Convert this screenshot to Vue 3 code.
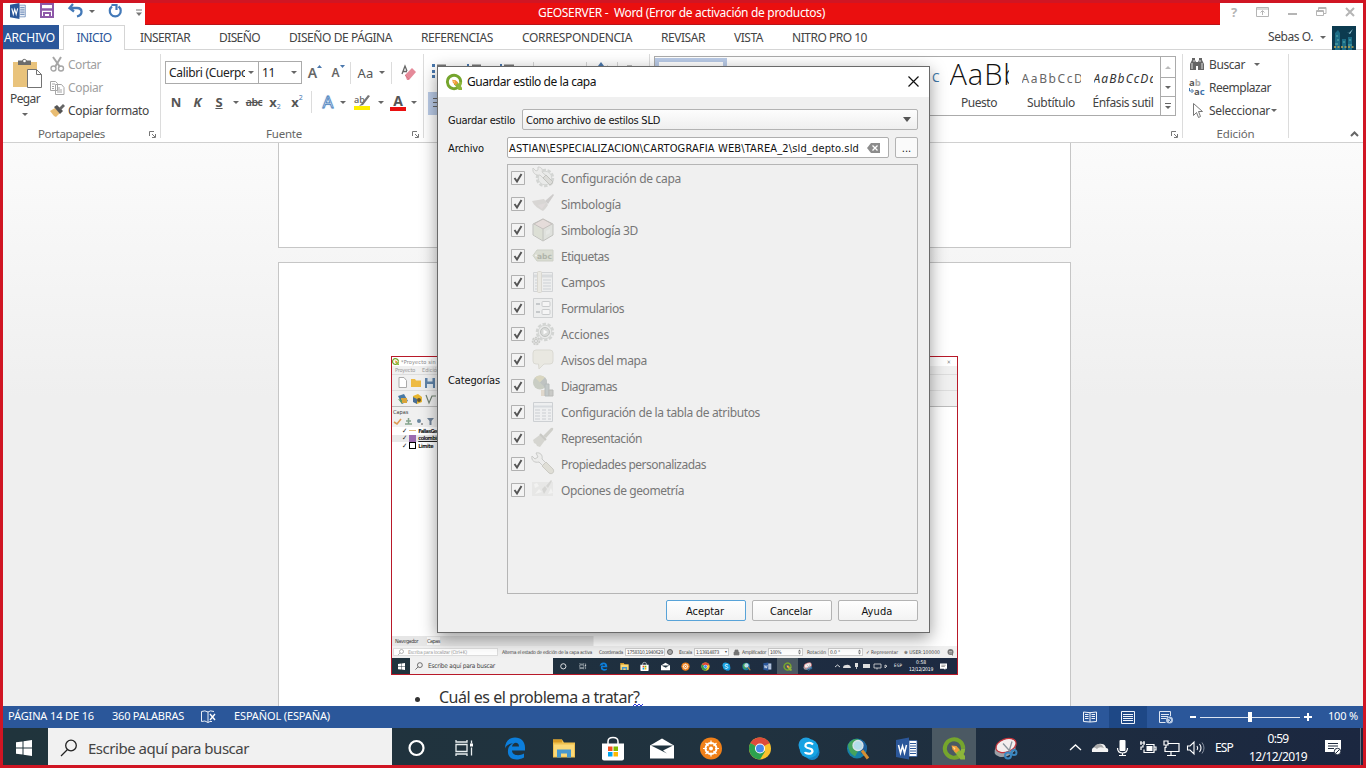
<script setup>
const fit = (el, { value }) => {
  if (!value) return
  const n = el.textContent.length
  const w = el.getBoundingClientRect().width
  el.style.letterSpacing = (value - w) / n + 'px'
}
const vFit = { mounted: fit }

const tabs = [
  ['INSERTAR', 50], ['DISEÑO', 41], ['DISEÑO DE PÁGINA', 103], ['REFERENCIAS', 72],
  ['CORRESPONDENCIA', 110], ['REVISAR', 44], ['VISTA', 29], ['NITRO PRO 10', 75]
]

const gear = '<circle cx="13" cy="11" r="8" fill="none" stroke="#d3d5d3" stroke-width="2.5" stroke-dasharray="3.4 1.6"/><circle cx="13" cy="11" r="6.8" fill="#e9eae9" stroke="#d3d5d3"/>'
const categories = [
  { t: 'Configuración de capa', w: 120, i: gear + '<path d="M1 1l3 3 2-1V0c4 0 5 3 4 5l10 9c2 3-1 5-3 3L8 8C4 9 0 6 1 1z" fill="#ebebea" stroke="#cfd0ce"/><path d="M11 11l7 7 3-3-7-7z" fill="#dcdcd9" stroke="#c2c3bf"/>' },
  { t: 'Simbología', w: 60, i: '<path d="M0 8l12-2 4 6c-2 3-3 4-5 6C7 16 2 13 0 8z" fill="#d8d6d4"/><path d="M13 8l8-7 1 1-6 9z" fill="#cecccb"/><path d="M6 12l8-2-4 6z" fill="#dfdada"/>' },
  { t: 'Simbología 3D', w: 77, i: '<path d="M11 0l10 5v11l-10 6-10-6V5z" fill="#dfe1dd" stroke="#c0c1bd"/><path d="M2 5l9-5 9 5-9 5z" fill="#e5dcda" stroke="#c4c0bd"/><path d="M2 6l9 5v10l-9-5z" fill="#dcdfd5"/><path d="M11 10v11" stroke="#c9cbc5" stroke-width="1.4"/><path d="M14 12l4-2v4l-4 2z" fill="#e5e7e4"/>' },
  { t: 'Etiquetas', w: 48, i: '<path d="M5 5h16v11H5l-4-5.500z" fill="#d9dcd2" stroke="#cdd0c7"/><circle cx="4" cy="10.500" r="1" fill="#f1f1ee"/><text x="5" y="13.500" font-family="DejaVu Sans" font-weight="bold" font-size="7.5" fill="#b0b4aa">abc</text>' },
  { t: 'Campos', w: 44, i: '<path d="M1.500 1.500h19v19h-19z" fill="#edeeee" stroke="#d2d4d6"/><path d="M2 5h18" stroke="#d8dbdd" stroke-width="3"/><path d="M3 9h3m5 0h8M3 12h3m5 0h8M3 15h3m5 0h8M3 18h3m5 0h8" stroke="#cdd1d5"/><rect x="5.500" y="0.500" width="4" height="21" rx="1" fill="#eae9e3" stroke="#dad8d1"/>' },
  { t: 'Formularios', w: 63, i: '<path d="M1.500 1.500h19v19h-19z" fill="#edeeee" stroke="#cfd1d2"/><path d="M4 7h4M4 15h4" stroke="#b9bdc0" stroke-width="1.600"/><rect x="10" y="4.500" width="8" height="5" rx="1" fill="#f5f5f5" stroke="#c9cbcc"/><rect x="10" y="12.500" width="8" height="5" rx="1" fill="#f5f5f5" stroke="#c9cbcc"/>' },
  { t: 'Acciones', w: 48, i: '<g transform="translate(0 -2)">' + gear + '<circle cx="13" cy="11" r="4.500" fill="#d8dad8" stroke="#c0c2c0"/><path d="M11.500 8.500l4 2.500-4 2.500z" fill="#fafafa"/></g><circle cx="4" cy="18" r="3.500" fill="#dedfdd" stroke="#cccdcb" stroke-width="1.600" stroke-dasharray="2 1"/><circle cx="4" cy="18" r="1.500" fill="#f0f0f0" stroke="#c7c8c6"/>' },
  { t: 'Avisos del mapa', w: 86, i: '<path d="M4 1h14q3 0 3 3v8q0 3-3 3h-6l-5 5-.5-5H4q-3 0-3-3V4q0-3 3-3z" fill="#e9e8e1" stroke="#dad9d2"/>' },
  { t: 'Diagramas', w: 56, i: '<circle cx="8" cy="7.500" r="7" fill="#c9cdc4"/><path d="M8 7.500L3 2.500a7 7 0 0 1 10 0z" fill="#d9d6c0"/><path d="M8 7.500l5-5a7 7 0 0 1 0 10z" fill="#bfc3c2"/><path d="M9 15h4v6H9z" fill="#e0d8cc"/><path d="M13 9h4v12h-4z" fill="#c3c9c9" stroke="#b6bbbb"/><path d="M17 15h4v6h-4z" fill="#c9cac7" stroke="#babbb8"/>' },
  { t: 'Configuración de la tabla de atributos', w: 199, i: '<path d="M1.500 1.500h19v19h-19z" fill="#eeeff0" stroke="#cdd0d3"/><path d="M2 5.500h18" stroke="#d7dade" stroke-width="2"/><path d="M3 9h5m2 0h4m2 0h3M3 12h5m2 0h4m2 0h3M3 15h5m2 0h4m2 0h3M3 18h5m2 0h4m2 0h3" stroke="#cacdd1"/>' },
  { t: 'Representación', w: 81, i: '<path d="M1 13l8-6 5 5-6 8-3-1-1-2-2-1z" fill="#d5d5d0"/><path d="M8 7l6 6" stroke="#c9c9c4" stroke-width="2"/><path d="M11 9l8-8q3-1 2 2l-7 8z" fill="#cfcfca"/>' },
  { t: 'Propiedades personalizadas', w: 145, i: '<path d="M4 0c4-1 7 2 6 6l4 4-3 3-4-4C3 10-1 8 0 3l3 3 3-2z" fill="#ececeb" stroke="#c9cac8"/><path d="M14 9l7 7c2 3-1 6-4 4l-7-7z" fill="#dfded6" stroke="#cbcac4"/>' },
  { t: 'Opciones de geometría', w: 123, i: '<path d="M0 3h21v14H0z" fill="#e7e7e6"/><path d="M2 5l3-1 2 3-4 2zM3 15l4-5 3 3zM16 15l3-6 2 5z" fill="#f2f2f1"/><path d="M10 10l3-3 2 3-3 5zM14 7l5-6 1 1-4 7z" fill="#d5d5d3"/>' }
]

const qgis = '<path d="M17.500 17.500A9.200 9.200 0 1 1 20.200 11" fill="none" stroke="#75a52d" stroke-width="4"/><path d="M20.200 11q0 3-1.500 5" fill="none" stroke="#8cb63a" stroke-width="4"/><path d="M11 10.500l4-.5 7 8.500V22h-4.500L11 14z" fill="#8db53a"/><path d="M8.500 8l5 .5 3 4-3.500 3-3.500-3.500z" fill="#f09a3a"/><path d="M9.500 9l3 1.500-1 2z" fill="#fae08f"/>'
const word = '<path d="M0 2.500L13 0v22L0 19.500z" fill="#2b579a"/><path d="M13 3h8v16h-8z" fill="#fff" stroke="#2b579a" stroke-width=".8"/><path d="M14 6h6M14 8.500h6M14 11h6M14 13.500h6M14 16h6" stroke="#2b579a"/><path d="M2.500 7.500l2 8 2-7 2 7 2-8" fill="none" stroke="#fff" stroke-width="1.500"/>'
const apps = [
  { i: '<circle cx="10.500" cy="10.500" r="7" fill="none" stroke="#fff" stroke-width="2.200"/>' },
  { i: '<path d="M1 2.500v2h11v-2M1 18.500v-2h11v2M1 7h11v7H1zM16.500 3v3M16.500 10v8" fill="none" stroke="#e8eef0" stroke-width="1.300"/><path d="M15 6h3v3h-3z" fill="#fff"/>' },
  { i: '<path d="M1 11C1 4 5 0 11 0c6 0 10 4 10 10v3H8c0 5 7 6 12 3v4C10 25 3 20 4 13c0-3 2-6 5-7-4 0-7 2-8 5zM8 9h7c0-5-6-5-7 0z" fill="#0c7edb"/>' },
  { i: '<path d="M0 2h9l2 3h11v15H0z" fill="#f0c14f"/><path d="M0 2h9v3H0z" fill="#d79a25"/><path d="M1 7h20v12H1z" fill="#fbd978"/><path d="M4 20v-8h14v8h-4v-4H8v4z" fill="#4698cf"/>' },
  { i: '<path d="M6 7V4q0-4 5-4t5 4v3" fill="none" stroke="#fff" stroke-width="1.500"/><path d="M0 6h22v15q0 2-2 2H2q-2 0-2-2z" fill="#fff"/><path d="M6 9h4.500v4.500H6z" fill="#f25022"/><path d="M11.500 9H16v4.500h-4.500z" fill="#7fba00"/><path d="M6 14.500h4.500V19H6z" fill="#00a4ef"/><path d="M11.500 14.500H16V19h-4.500z" fill="#ffb900"/>' },
  { i: '<path d="M-1 8L11 1l12 7v13H-1z" fill="#fff"/><path d="M0 8h22l-10 5 4 3L0 8z" fill="#203440"/>' },
  { i: '<circle cx="11" cy="11" r="11" fill="#f08019"/><circle cx="11" cy="11" r="5.500" fill="none" stroke="#fff" stroke-width="2"/><circle cx="11" cy="11" r="2" fill="#fff"/><path d="M11 3v4M11 15v4M3 11h4M15 11h4M5.500 5.500l3 3M13.500 13.500l3 3M16.500 5.500l-3 3M8.500 13.500l-3 3" stroke="#fff" stroke-width="1.200"/>' },
  { i: '<circle cx="11" cy="11" r="11" fill="#fbc22c"/><path d="M11 11L1.500 5.500A11 11 0 0 1 20.500 5.500z" fill="#de4b3c"/><path d="M11 11L1.500 5.500A11 11 0 0 0 11 22l5-8z" fill="#2da14e"/><path d="M2 6A11 11 0 0 1 20.500 6H11z" fill="#de4b3c"/><circle cx="11" cy="11" r="5" fill="#fff"/><circle cx="11" cy="11" r="4" fill="#4688ec"/>' },
  { i: '<circle cx="8" cy="7.500" r="7.500" fill="#1f9fe0"/><circle cx="14" cy="15" r="7.500" fill="#1585c8"/><circle cx="11" cy="11" r="9.500" fill="#16a3e3"/><path d="M15 7q-2-2-5-1.500T7.500 9q1 1.500 4 2t3 3q-1 2.500-4 2.200T7 14.500" fill="none" stroke="#fff" stroke-width="2.200"/>' },
  { i: '<circle cx="10" cy="11" r="10" fill="#1680a8"/><path d="M1 7q5-7 11-5l-3 4 4 4-5 9q-7-4-7-12z" fill="#45a35c"/><path d="M13 2q7 3 7 10l-6 5z" fill="#1e5e9c"/><circle cx="11" cy="8" r="5" fill="#b4dcea" stroke="#dce3e8" stroke-width="1.300"/><path d="M15 13l6 8" stroke="#d68e32" stroke-width="3"/>' },
  { i: word },
  { i: qgis, active: true },
  { i: '<ellipse cx="11" cy="12" rx="11" ry="7" fill="#9b9fa6" transform="rotate(-20 11 12)"/><ellipse cx="12" cy="8" rx="10.500" ry="6.500" fill="#f3eeee" stroke="#c4343c" stroke-width="1.200" transform="rotate(-20 12 8)"/><path d="M9 6l9 10M18 4l-3 10" stroke="#8a949c" stroke-width="1.300"/><circle cx="14" cy="18" r="3" fill="none" stroke="#3b86c0" stroke-width="2"/><circle cx="20" cy="15" r="2.500" fill="none" stroke="#3b86c0" stroke-width="2"/>' }
]
</script>

<template>
  <div class="screen">
    <header class="title">
      <div class="quick">
        <svg class="q1" width="16" height="16" viewBox="0 0 22 22" v-html="word" />
        <svg class="q2" width="14" height="14" viewBox="0 0 14 14"><path d="M1 0v13h12V0zM4 13V9h6v4" fill="none" stroke="#8d58a8" stroke-width="2" /><path d="M1 5.500h12" stroke="#8d58a8" stroke-width="2.500" /></svg>
        <svg class="q3" width="16" height="14" viewBox="0 0 16 14"><path d="M5 0L1.500 4 6 7.500M2 4h7c6 0 6 7 0 8.500" fill="none" stroke="#4379b8" stroke-width="2.300" /></svg>
        <i class="arr q4" />
        <svg class="q5" width="14" height="14" viewBox="0 0 14 14"><path d="M10.500 2.500A5.500 5.500 0 1 1 4 2.500M3.500 1h5v5" fill="none" stroke="#4379b8" stroke-width="2.200" /></svg>
        <svg class="q6" width="6" height="8" viewBox="0 0 6 8"><path d="M0 1h6" stroke="#777" /><path d="M0 3.500h6L3 7z" fill="#777" /></svg>
      </div>
      <div class="caption"><span v-fit="287">GEOSERVER -&nbsp; Word (Error de activación de productos)</span></div>
      <div class="winbtns">
        <b>?</b>
        <svg width="14" height="12" viewBox="0 0 14 12"><path d="M.5 1.500h12v9H.5zM.5 3h12M6.500 9V5M4.500 6.500l2-2 2 2" fill="none" stroke="#b5b5b5" /></svg>
        <svg width="10" height="12" viewBox="0 0 10 12"><path d="M0 8h9" stroke="#b5b5b5" stroke-width="2" /></svg>
        <svg width="11" height="12" viewBox="0 0 11 12"><path d="M.5 4.500h7v5h-7zM2.500 4V1.500h7.500v6H8M.5 5.500h7M2.500 2.500H10" fill="none" stroke="#b5b5b5" /></svg>
        <svg width="10" height="12" viewBox="0 0 10 12"><path d="M1 2l8 8M9 2l-8 8" stroke="#b5b5b5" stroke-width="2" /></svg>
      </div>
    </header>

    <nav class="tabs">
      <div class="file"><span v-fit="51">ARCHIVO</span></div>
      <div class="home"><span v-fit="35">INICIO</span></div>
      <div class="others"><span v-for="t in tabs" :key="t[0]" v-fit="t[1]">{{ t[0] }}</span></div>
      <div class="user">
        <span v-fit="45">Sebas O.</span><i class="arr" />
        <svg width="24" height="24" viewBox="0 0 24 24"><path d="M0 0h24v24H0z" fill="#0c3b50" /><path d="M3 24V7l3-3 2 3v17zM10 24V13h4v11zM16 24V11h4v13z" fill="#1c6c86" /><path d="M4 10h2M5 14h2M11 16h2M17 14h2M3 18h3M16 19h4" stroke="#5db0ad" /><path d="M2 21h20" stroke="#c3a650" stroke-width="1.500" stroke-dasharray="2 1.500" /><path d="M15 6l2 1 4-4-3 5z" fill="#9fd0de" /></svg>
      </div>
    </nav>

    <section class="ribbon">
      <div class="group g1">
        <div class="clip">
          <div class="paste">
            <svg width="29" height="31" viewBox="0 0 29 31"><path d="M0 4h24v25H0z" fill="#e9c37c" /><path d="M5 7V2.500h4Q11-1 14 2.500h4V7z" fill="#6c6c6c" /><circle cx="11.500" cy="3" r="1.300" fill="#fff" /><path d="M14.500 11.500h9l5 5v13h-14z" fill="#fff" stroke="#737373" /><path d="M23.500 11.500v5h5" fill="none" stroke="#737373" /></svg>
            <span v-fit="30">Pegar</span><i class="arr" />
          </div>
          <div class="cuts">
            <div class="dim"><svg width="15" height="15" viewBox="0 0 15 15"><path d="M3 0l7 10M11 0L5 10" stroke="#a6a6a6" stroke-width="2" /><circle cx="3.500" cy="11.500" r="2.500" fill="none" stroke="#a6a6a6" stroke-width="1.400" /><circle cx="11" cy="11.500" r="2.500" fill="none" stroke="#a6a6a6" stroke-width="1.400" /></svg><span v-fit="33">Cortar</span></div>
            <div class="dim"><svg width="15" height="15" viewBox="0 0 15 15"><path d="M.5 1.500h5l2 2v7h-7zM5.500 4.500h6l2.500 3v7H5.500z" fill="#fff" stroke="#a6a6a6" /><path d="M2 4h3M2 6.500h2M2 8.500h2M7 8h3M7 10h5M7 12h5" stroke="#a6a6a6" /></svg><span v-fit="35">Copiar</span></div>
            <div><svg width="15" height="15" viewBox="0 0 15 15"><path d="M0 8l5-3 5 5-4 4-2-1z" fill="#e9bd73" /><path d="M4 4l3-2 6 6-3 3z" fill="#555" /><path d="M9 5l4-4 2 2-4 4z" fill="#666" /></svg><span v-fit="81">Copiar formato</span></div>
          </div>
        </div>
        <div class="foot"><span v-fit="67">Portapapeles</span><svg class="launch" width="7" height="7" viewBox="0 0 7 7"><path d="M.5 5V.5H5M3 3l3 3M6.500 3v3.500H3" fill="none" stroke="#777" /></svg></div>
      </div>

      <div class="group g2">
        <div class="frow1">
          <div class="cb c1"><div class="crop"><span v-fit="79">Calibri (Cuerpo</span></div><i class="arr" /></div>
          <div class="cb c2"><span v-fit="13">11</span><i class="arr" /></div>
          <div class="cell w24 grow"><b class="ga">A</b><svg width="5" height="3" viewBox="0 0 5 3"><path d="M0 3l2.500-3L5 3z" fill="#4a78ad" /></svg></div>
          <div class="cell w22 grow"><b class="gb">A</b><svg width="5" height="3" viewBox="0 0 5 3"><path d="M0 0l2.500 3L5 0z" fill="#4a78ad" /></svg></div>
          <i class="vs" />
          <div class="cell aa"><span v-fit="16">Aa</span><i class="arr" /></div>
          <i class="vs" />
          <svg class="eraser" width="17" height="16" viewBox="0 0 17 16"><path d="M1 9L4 1l2 5M2 6.500h4" fill="none" stroke="#666" stroke-width="1.300" /><path d="M4 10l7-7 4 4-7 8H6z" fill="#e58a99" /><path d="M4 10l4 4" stroke="#d87888" /></svg>
        </div>
        <div class="frow2">
          <b class="cell w22">N</b><b class="cell w21 it">K</b><b class="cell w22 un">S</b><i class="arr" />
          <span class="cell abc">abc</span>
          <span class="cell w22"><b>x</b><sub>2</sub></span><span class="cell w22"><b>x</b><sup>2</sup></span><i class="vs" />
          <span class="cell w24 glow">A</span><i class="arr" />
          <svg class="hl" width="17" height="17" viewBox="0 0 17 17"><text x="0" y="9" font-family="Open Sans" font-weight="600" font-size="9" fill="#666">ab</text><path d="M7 10l7-9 2 1-7 9-4 1z" fill="#767676" /><path d="M0 12h16v4H0z" fill="#ffef00" /></svg><i class="arr" />
          <b class="cell fc">A</b><i class="arr" />
        </div>
        <div class="foot"><span v-fit="36">Fuente</span><svg class="launch" width="7" height="7" viewBox="0 0 7 7"><path d="M.5 5V.5H5M3 3l3 3M6.500 3v3.500H3" fill="none" stroke="#777" /></svg></div>
      </div>

      <div class="group g3">
        <svg width="200" height="18" viewBox="0 0 200 18"><g fill="#4a78ad"><path d="M0 2h3v3H0zM0 8h3v3H0zM0 13h3v3H0zM35 2h2v3h-2zM68 2h2v3h-2zM166 4l3-4 3 4z" /></g><path d="M5 3.500h9M40 3.500h9M72 3.500h10M195 4.500h5" stroke="#777" stroke-width="2" /><path d="M101.500 0v16M154.500 0v16M185.500 0v16M175.500 3v14" stroke="#d6d6d6" /></svg>
        <div class="just"><svg width="10" height="14" viewBox="0 0 10 14"><path d="M0 1.500h10M0 5.500h10M0 9.500h10" stroke="#666" /></svg></div>
      </div>

      <div class="group g4">
        <div class="gallery">
          <div class="sel" />
          <div class="prev"><span>C</span></div>
          <div class="style"><div class="big"><span v-fit="72">AaBb</span></div><small v-fit="36">Puesto</small></div>
          <div class="style"><div class="sub"><span v-fit="63">AaBbCcD</span></div><small v-fit="48">Subtítulo</small></div>
          <div class="style"><div class="emp"><span v-fit="64">AaBbCcDd</span></div><small v-fit="61">Énfasis sutil</small></div>
          <div class="scr"><div><i class="up" /></div><div><i class="arr" /></div><div><svg width="6" height="7" viewBox="0 0 6 7"><path d="M0 .5h6" stroke="#666" /><path d="M0 3h6L3 6z" fill="#666" /></svg></div></div>
        </div>
        <div class="foot"><svg class="launch" width="7" height="7" viewBox="0 0 7 7"><path d="M.5 5V.5H5M3 3l3 3M6.500 3v3.500H3" fill="none" stroke="#777" /></svg></div>
      </div>

      <div class="group g5">
        <div class="edits">
          <div><svg width="16" height="15" viewBox="0 0 16 15"><path d="M1 13V7l2-4V1h3v2l1 2h2l1-2V1h3v2l2 4v6h-6V9H7v4z" fill="#666" /><path d="M3 6v6M13 6v6M5 3v2M11 3v2" stroke="#ddd" /></svg><span v-fit="36">Buscar</span><i class="arr far" /></div>
          <div><svg width="16" height="18" viewBox="0 0 16 18"><text x="0" y="7" font-family="Open Sans" font-weight="bold" font-size="9.5" fill="#555">a<tspan fill="#aaa">b</tspan></text><text x="5" y="15.500" font-family="Open Sans" font-weight="bold" font-size="9.5" fill="#555">a<tspan fill="#3e74ad">c</tspan></text><path d="M.5 9v3h3M2.500 10l2 2-2 2" stroke="#3e74ad" fill="none" /></svg><span v-fit="62">Reemplazar</span></div>
          <div><svg width="16" height="15" viewBox="0 0 16 15"><path d="M4.500.5v12l3-3 2 5 2-1-2-5h4z" fill="#fff" stroke="#777" /></svg><span v-fit="61">Seleccionar</span><i class="arr near" /></div>
        </div>
        <div class="foot"><span v-fit="38">Edición</span></div>
      </div>
      <svg class="collapse" width="9" height="6" viewBox="0 0 9 6"><path d="M1 5l3.500-3.500L8 5" fill="none" stroke="#666" stroke-width="2" /></svg>
    </section>

    <main class="doc">
      <div class="page p1" />
      <div class="page p2">
        <div class="shot">
          <div class="s-title"><svg width="7" height="7" viewBox="0 0 22 22" v-html="qgis" /><span v-fit="72">*Proyecto sin título — QGIS</span><em>✕</em></div>
          <div class="s-menu"><span v-fit="20">Proyecto</span><span v-fit="18">Edición</span></div>
          <div class="s-bar">
            <svg width="9" height="11" viewBox="0 0 9 11"><path d="M1 .5h5l2.500 3v7H1z" fill="#fff" stroke="#aaa" /></svg>
            <svg width="10" height="9" viewBox="0 0 10 9"><path d="M0 1h4l1 1.500h5V9H0z" fill="#eebb43" /></svg>
            <svg width="10" height="10" viewBox="0 0 10 10"><path d="M0 0h10v10H0z" fill="#5f83a9" /><path d="M2.500 0h5v3.500h-5zM2 6h6v4H2z" fill="#e4ebf1" /></svg>
          </div>
          <div class="s-bar">
            <svg width="10" height="10" viewBox="0 0 10 10"><path d="M0 2l6-2 4 7-6 3z" fill="#4979a4" /><path d="M3 4h6v5H3z" fill="#d9a53c" /><path d="M0 5l4 1v4z" fill="#609b63" /></svg>
            <svg width="10" height="10" viewBox="0 0 10 10"><path d="M1 2l5-2 4 3v5l-5 2-4-3z" fill="#e8b62f" /><path d="M1 3l4 2v5L1 8z" fill="#486e96" /><circle cx="7" cy="6" r="2" fill="#665831" /></svg>
            <svg width="10" height="10" viewBox="0 0 10 10"><path d="M0 1l3 8 3-7h4" fill="none" stroke="#718171" stroke-width="1.200" /></svg>
          </div>
          <div class="s-lab">Capas</div>
          <div class="s-bar s-tools">
            <svg width="7" height="7" viewBox="0 0 7 7"><path d="M0 4l3 2 4-5" stroke="#dd9a55" stroke-width="1.600" fill="none" /></svg>
            <svg width="7" height="7" viewBox="0 0 7 7"><path d="M0 6h7M1 3h5M3.500 0v6" stroke="#84a28c" stroke-width="1.500" /></svg>
            <svg width="7" height="7" viewBox="0 0 7 7"><circle cx="3" cy="3" r="2" fill="#6a87a0" /><path d="M5 6h2" stroke="#555" /></svg>
            <svg width="7" height="7" viewBox="0 0 7 7"><path d="M0 0h7L4.500 3v4h-2V3z" fill="#71849a" /></svg>
          </div>
          <div class="s-layers">
            <div><i>✓</i><u class="l1" /><span v-fit="36">FallasGeologicas</span></div>
            <div class="on"><i>✓</i><u class="l2" /><span class="ul" v-fit="21">colombia</span></div>
            <div><i>✓</i><u class="l3" /><span v-fit="15">Limite</span></div>
          </div>
          <div class="s-fill" />
          <div class="s-dock"><span v-fit="23">Navegador</span><span class="cur" v-fit="13">Capas</span></div>
          <div class="s-status">
            <div class="loc"><svg width="6" height="6" viewBox="0 0 6 6"><circle cx="3.500" cy="2.500" r="2" fill="none" stroke="#999" stroke-width=".7" /><path d="M2 4L0 6" stroke="#999" stroke-width=".7" /></svg><span v-fit="59">Escriba para localizar (Ctrl+K)</span></div>
            <span class="m1" v-fit="90">Alterna el estado de edición de la capa activa</span>
            <span class="m2" v-fit="24">Coordenada</span><div class="bx b1"><span v-fit="36">1758310,1940629</span></div>
            <svg class="m3" width="6" height="6" viewBox="0 0 6 6"><circle cx="3" cy="3" r="2.500" fill="#aaa" stroke="#666" /></svg>
            <span class="m4" v-fit="13">Escala</span><div class="bx b2"><span v-fit="23">1:13914873</span><small>▾</small></div>
            <svg class="m5" width="5" height="6" viewBox="0 0 5 6"><path d="M0 3h5v3H0zM1 3V1h3v2" fill="#777" stroke="#777" stroke-width=".7" /></svg>
            <span class="m6" v-fit="24">Amplificador</span><div class="bx b3"><span v-fit="11">100%</span><svg width="3" height="6" viewBox="0 0 3 6"><path d="M0 2.500L1.500.500 3 2.500zM0 3.500h3l-1.500 2z" fill="#777" /></svg></div>
            <span class="m7" v-fit="19">Rotación</span><div class="bx b4"><span v-fit="10">0.0 °</span><svg width="3" height="6" viewBox="0 0 3 6"><path d="M0 2.500L1.500.500 3 2.500zM0 3.500h3l-1.500 2z" fill="#777" /></svg></div>
            <span class="m8" v-fit="32">✓ Representar</span><span class="m9" v-fit="36">⊕ USER:100000</span>
            <svg class="m10" width="7" height="7" viewBox="0 0 7 7"><circle cx="3.500" cy="3" r="3" fill="#777" /><path d="M4 5l2 2V4z" fill="#777" /><path d="M2 2.500h3M2 4h3" stroke="#ddd" stroke-width=".6" /></svg>
          </div>
          <div class="s-task">
            <div class="s-start"><svg width="7" height="7" viewBox="0 0 16 16"><path d="M0 2l7-1v7H0zM8 1l8-1v8H8zM0 9h7v6l-7-1zM8 9h8v7l-8-1z" fill="#fff" /></svg></div>
            <div class="s-search"><svg width="8" height="8" viewBox="0 0 18 18"><circle cx="11" cy="7" r="5.500" fill="none" stroke="#333" stroke-width="1.500" /><path d="M7 11l-6 6" stroke="#333" stroke-width="1.500" /></svg><span v-fit="67">Escribe aquí para buscar</span></div>
            <div v-for="(a, k) in apps" :key="k" class="s-app" :class="{ act: a.active }"><svg width="9" height="9" viewBox="-1 -1 24 24" v-html="a.i" /></div>
            <svg class="s-tray" width="52" height="8" viewBox="0 0 52 8"><path d="M0 5l2.500-2L5 5" fill="none" stroke="#fff" stroke-width=".8" /><path d="M8 6q0-3 3-3 4-1 5 3zM20 1h3v4h-3zM28 2h7v4h-7z" fill="#ddd" /><path d="M21.500 5v2M39 2h7v4h-7zM42 6v1.500M50 3v3l2-2z" stroke="#ddd" fill="none" stroke-width=".8" /></svg>
            <span class="s-esp" v-fit="8">ESP</span><div class="s-clock"><span>0:58</span><span v-fit="24">12/12/2019</span></div>
            <svg class="s-note" width="7" height="7" viewBox="0 0 16 16"><path d="M0 1h16v12h-4v3l-3-3H0z" fill="#fff" /><path d="M3 5h10M3 8h8" stroke="#222" /></svg>
          </div>
        </div>
        <div class="bullet"><i /><span v-fit="194">Cuál es el problema a tratar</span><span class="sq">?<svg width="10" height="4" viewBox="0 0 10 4"><path d="M0 3l2-2 2 2 2-2 2 2 2-2" fill="none" stroke="#2a36d8" /></svg></span></div>
      </div>
    </main>

    <footer class="status">
      <span v-fit="86">PÁGINA 14 DE 16</span><span class="st2" v-fit="72">360 PALABRAS</span>
      <svg class="st3" width="16" height="14" viewBox="0 0 16 14"><path d="M7 2Q4 0 .5 1.500v10Q4 10 7 12.500V2q2-2 6-.5M7 12.500q2-1.500 4-1" fill="none" stroke="#e8eef7" /><path d="M9 4l5 6M14 4L9 10" stroke="#fff" stroke-width="1.400" /></svg>
      <span class="st4" v-fit="96">ESPAÑOL (ESPAÑA)</span>
      <div class="right">
        <svg width="14" height="12" viewBox="0 0 14 12"><path d="M7 1.500v9.500M.5 1l6.500.7L13.500 1v9.500L7 11l-6.500-.5zM2 3.500h3.500M2 5.500h3.500M2 7.500h3.500M8.500 3.500H12M8.500 5.500H12M8.500 7.500H12" fill="none" stroke="#eef3fa" /></svg>
        <div class="view"><svg width="14" height="13" viewBox="0 0 14 13"><path d="M.5.500h13v12H.5zM2 3.500h10M2 5.500h10M2 7.500h10M2 9.500h10" fill="none" stroke="#eef3fa" /></svg></div>
        <svg class="web" width="15" height="13" viewBox="0 0 15 13"><path d="M11.500 5V.5H.5v11h6M2 3.500h8M2 5.500h7M2 7.500h5" fill="none" stroke="#dfe7f3" /><circle cx="10.500" cy="9" r="3.500" fill="#b9cbe4" /><path d="M9 7l3 2-2 2" stroke="#2b579a" fill="none" /></svg>
        <svg class="zoom" width="124" height="12" viewBox="0 0 124 12"><path d="M1 6h6M115 6h8M119 2v8" stroke="#fff" stroke-width="2" /><path d="M11 6.500h100" stroke="#dbe4f1" /><path d="M59 1h4v10h-4z" fill="#fff" /></svg>
        <span v-fit="30">100 %</span>
      </div>
    </footer>

    <footer class="taskbar">
      <div class="start"><svg width="16" height="16" viewBox="0 0 16 16"><path d="M0 2.300l6.500-.9v6.100H0zM7.500 1.200L16 0v7.500H7.500zM0 8.500h6.500v6.100L0 13.700zM7.500 8.500H16V16l-8.500-1.200z" fill="#fff" /></svg></div>
      <div class="search"><svg width="18" height="18" viewBox="0 0 18 18"><circle cx="11" cy="6.500" r="5.300" fill="none" stroke="#222" stroke-width="1.300" /><path d="M7.500 10.500L1 17" stroke="#222" stroke-width="1.300" /></svg><span v-fit="161">Escribe aquí para buscar</span></div>
      <div v-for="(a, k) in apps" :key="k" class="app" :class="{ act: a.active }"><svg width="22" height="23" viewBox="0 -0.500 22 23" v-html="a.i" /></div>
      <div class="tray">
        <svg width="142" height="18" viewBox="0 0 142 18"><path d="M1 11l5.500-5L12 11" fill="none" stroke="#fff" stroke-width="1.300" /><path d="M23 13q-1-5 4-5 1-4 6-3 3 0 4 4 3 0 2 4z" fill="#f3f3f3" /><path d="M25 8q3-5 8-2l2 3q-5-2-7 1z" fill="#aaa" /><rect x="50.500" y="1" width="6" height="11" rx="1" fill="#fff" /><path d="M48.500 9q0 5 5 5t5-5M53.500 14v3M50 16.500h7" stroke="#fff" fill="none" stroke-width="1.200" /><path d="M71 4h5M72 2v4M75 2v4M74 6v2h-2v3M77 5.500h8v8h-10v-3M85.500 8h1.500v3h-1.500" fill="none" stroke="#fff" stroke-width="1.200" /><path d="M77.500 7h6v5h-6z" fill="#fff" /><path d="M99 4.500h11v8H96V8M102 13v3M98 16.500h9M95 2h4v4h-4zM97 6v3" fill="none" stroke="#fff" stroke-width="1.200" /><path d="M118.500 7h2.500l4-4v12l-4-4h-2.500zM128 7q1.500 2 0 4M130.500 5q3 4 0 8" fill="none" stroke="#fff" stroke-width="1.100" /><path d="M133 3.500q4 5.500 0 11" fill="none" stroke="#8891a0" /></svg>
        <span class="esp" v-fit="18">ESP</span>
        <div class="clock"><span v-fit="21">0:59</span><span v-fit="58">12/12/2019</span></div>
        <svg class="note" width="17" height="16" viewBox="0 0 17 16"><path d="M0 0h16v11l-4 4-3-3H0z" fill="#fff" /><path d="M3 3.500h10M3 6h10M3 8.500h6" stroke="#202c40" /><circle cx="12.500" cy="11.500" r="3.200" fill="#fff" stroke="#202c40" /><path d="M10.500 13.500l4-4" stroke="#202c40" /></svg>
        <i class="peek" />
      </div>
    </footer>

    <div class="dialog">
      <div class="d-title"><svg width="16" height="16" viewBox="0 0 22 22" v-html="qgis" /><span v-fit="129">Guardar estilo de la capa</span><svg class="x" width="11" height="11" viewBox="0 0 11 11"><path d="M.5.500l10 10M10.500.500l-10 10" stroke="#111" stroke-width="1.200" /></svg></div>
      <div class="d-body">
        <div class="row r1"><label v-fit="67">Guardar estilo</label><div class="select"><span v-fit="134">Como archivo de estilos SLD</span><svg width="8" height="5" viewBox="0 0 8 5"><path d="M0 0h8L4 5z" fill="#555" /></svg></div></div>
        <div class="row r2"><label v-fit="36">Archivo</label><div class="input"><span v-fit="350">ASTIAN\ESPECIALIZACION\CARTOGRAFIA WEB\TAREA_2\sld_depto.sld</span><svg width="13" height="10" viewBox="0 0 13 10"><path d="M0 5l4-5h9v10H4z" fill="#8c8c8c" /><path d="M5.500 2.500l5 5M10.500 2.500l-5 5" stroke="#fff" stroke-width="1.300" /></svg></div><div class="dots">...</div></div>
        <div class="row r3"><label v-fit="52">Categorías</label>
          <div class="list">
            <div v-for="c in categories" :key="c.t" class="item">
              <svg class="chk" width="14" height="14" viewBox="0 0 14 14"><path d="M.5.500h13v13H.5z" fill="#f3f3f3" stroke="#b1b1b1" /><path d="M3.500 7l2.500 3.500L10.500 3" fill="none" stroke="#555" stroke-width="1.900" /></svg>
              <svg class="ci" width="22" height="22" viewBox="0 0 22 22" v-html="c.i" />
              <span v-fit="c.w">{{ c.t }}</span>
            </div>
          </div>
        </div>
        <div class="btns"><div class="btn def"><span v-fit="38">Aceptar</span></div><div class="btn"><span v-fit="42">Cancelar</span></div><div class="btn"><span v-fit="31">Ayuda</span></div></div>
      </div>
    </div>
  </div>
</template>

<style>
html, body { margin: 0; overflow: hidden; background: #cf1522; }
</style>

<style scoped>
* { box-sizing: border-box; }
.screen { position: relative; width: 1366px; height: 768px; border: 3px solid #d01523; display: flex; flex-direction: column; background: #fff; font: 12px/16px "Noto Sans", "Open Sans", sans-serif; color: #444; overflow: hidden; }
span, label, small { white-space: pre; display: inline-block; flex: none; }
svg { flex: none; display: block; overflow: visible; }
i.arr { flex: none; width: 0; height: 0; border: 3px solid transparent; border-top: 3px solid #666; border-bottom: 0; display: block; }
.title { height: 22px; flex: none; display: flex; }
.quick { width: 142px; display: flex; align-items: center; padding: 0 0 6px 7px; }
.q2 { margin-left: 14px; } .q3 { margin-left: 14px; } .q4 { margin-left: 5px; } .q5 { margin-left: 13px; } .q6 { margin: 3px 0 0 14px; }
.caption { width: 1075px; margin-top: -3px; padding-top: 5px; background: #ea0f0f; border-bottom: 1px solid #b91318; color: #fff; text-align: center; padding-right: 2px; }
.winbtns { flex: 1; display: flex; align-items: center; padding: 0 0 5px 11px; gap: 18px; color: #b5b5b5; }
.winbtns b { font-size: 13px; width: 7px; }
.tabs { height: 25px; flex: none; display: flex; border-bottom: 1px solid #d5d5d5; }
.file { width: 56px; background: #2b579a; color: #fff; padding: 5px 0 0 1px; height: 24px; }
.home { width: 62px; margin-left: 4px; border: 1px solid #d5d5d5; border-bottom: 0; background: #fff; height: 25px; text-align: center; color: #2b579a; padding: 4px 0 0; }
.others { display: flex; gap: 29px; padding: 5px 0 0 15px; }
.user { margin-left: auto; display: flex; align-items: center; padding-right: 7px; }
.user .arr { margin: 0 6px 0 7px; }
.user svg { margin-top: 1px; }
.ribbon { height: 93px; flex: none; display: flex; border-bottom: 1px solid #d0d0d0; position: relative; background: #fff; }
.group { position: relative; flex: none; height: 92px; display: flex; flex-direction: column; }
.group::after { content: ""; position: absolute; right: 0; top: 4px; height: 84px; width: 1px; background: #dcdcdc; }
.g1 { width: 158px; } .g2 { width: 263px; } .g3 { width: 226px; } .g4 { width: 533px; } .g5 { width: 106px; }
.foot { margin-top: auto; height: 16px; display: flex; justify-content: center; align-items: center; color: #666; position: relative; font-size: 11.5px; }
.g1 .foot { padding-right: 21px; } .g2 .foot { padding-right: 17px; }
.launch { position: absolute; right: 5px; top: 5px; }
.clip { display: flex; }
.paste { width: 44px; display: flex; flex-direction: column; align-items: center; padding-top: 8px; }
.paste svg { margin-left: 4px; } .paste span { margin-top: 2px; } .paste .arr { margin-top: 6px; }
.cuts { padding: 3px 0 0 3px; }
.cuts div { height: 23px; display: flex; align-items: center; gap: 3px; }
.dim { color: #a0a0a0; }
.frow1 { display: flex; height: 23px; margin: 11px 0 0 4px; align-items: center; }
.cb { height: 23px; border: 1px solid #ababab; display: flex; align-items: center; justify-content: space-between; padding: 0 4px 0 3px; color: #222; }
.c1 { width: 94px; } .crop { width: 76px; height: 16px; overflow: hidden; } .c2 { width: 44px; margin-left: -1px; }
.cell { display: flex; justify-content: center; align-items: center; color: #555; }
.w21 { width: 21px; } .w22 { width: 22px; } .w24 { width: 24px; }
.grow { align-items: flex-start; height: 22px; position: relative; top: -1px; left: 1px; }
.grow b { font-weight: 600; color: #666; margin-top: 4px; } .ga { font-size: 14px; } .gb { font-size: 12px; } .grow svg { margin-top: 4px; }
.vs { display: block; width: 1px; height: 22px; background: #dcdcdc; flex: none; }
.frow1 .vs:nth-of-type(1) { margin-left: 2px; }
.aa { width: 40px; gap: 5px; font-size: 13px; } .eraser { margin-left: 9px; }
.frow2 { display: flex; margin: 7px 0 0 4px; height: 22px; align-items: center; font-size: 13px; }
.it { font-style: italic; } .un { text-decoration: underline; }
.frow2 > .arr:nth-of-type(1) { margin: 0 5px 0 3px; }
.abc { width: 20px; font-size: 10.5px; font-weight: 600; text-decoration: line-through; letter-spacing: -.5px; }
sub, sup { font-size: 7px; color: #3f73ad; line-height: 8px; } sub { margin-top: 9px; } sup { margin-top: -9px; }
.frow2 .vs { margin: 0 4px 0 3px; }
.glow { font-size: 17px; color: #fff; -webkit-text-stroke: .8px #4a80bd; text-shadow: 0 0 2px #8cb7e5; }
.hl { margin: 0 7px 0 8px; }
.fc { width: 16px; height: 17px; margin: 0 5px 0 6px; font-size: 14px; border-bottom: 4px solid #ea1010; line-height: 13px; }
.g3 { padding: 12px 0 0 8px; }
.just { margin: 12px 0 0 -4px; width: 30px; height: 23px; background: #b9cae6; padding: 5px 0 0 5px; }
.gallery { margin: 6px 0 0 4px; width: 522px; height: 60px; border: 1px solid #ababab; display: flex; }
.sel { width: 72px; margin: 1px 0; border: 4px solid #b9cae6; }
.prev { width: 216px; padding: 13px 0 0 205px; color: #3f7aaa; }
.prev span { width: 8px; }
.style { width: 72px; display: flex; flex-direction: column; align-items: center; }
.style > div { width: 59px; height: 37px; overflow: hidden; display: flex; align-items: center; }
.big { font-size: 29px; color: #111; font-weight: 300; font-family: "Open Sans", sans-serif; } .big span { line-height: 34px; margin-top: -3px; }
.sub { color: #666; } .sub span, .emp span { margin-top: 7px; } .emp { font-style: italic; color: #333; }
.style small { font-size: 12px; margin-top: 1px; }
.scr { width: 15px; margin-left: auto; border-left: 1px solid #ababab; }
.scr div { height: 19px; display: flex; align-items: center; justify-content: center; border-bottom: 1px solid #ababab; } .scr div:first-child { height: 21px; } .scr div:last-child { border: 0; height: 18px; }
.up { border: 3px solid transparent; border-top: 0; border-bottom: 3px solid #bbb; }
.edits { padding: 3px 0 0 6px; } .edits > div { height: 23px; display: flex; align-items: center; } .edits span { margin-left: 4px; }
.far { margin-left: 9px !important; } .near { margin-left: 1px !important; }
.collapse { margin: 81px 0 0 61px; }
.g5 .foot { padding-right: 1px; }
.doc { height: 563px; flex: none; background: linear-gradient(#fbfbfb, #efefef 45%); overflow: hidden; }
.page { width: 793px; margin-left: 275px; background: #fff; border: 1px solid #c6c6c6; }
.p1 { height: 105px; border-top: 0; }
.p2 { margin-top: 14px; height: 500px; padding: 93px 0 0 112px; }
.shot { width: 567px; height: 319px; border: 1px solid #b81929; background: #f0f0f0; display: flex; flex-direction: column; font: 5.5px/8px "DejaVu Sans Condensed", "DejaVu Sans", sans-serif; color: #444; overflow: hidden; }
.s-title { height: 9px; background: #fff; display: flex; align-items: center; gap: 2px; flex: none; color: #888; } .s-title em { margin-left: auto; padding-right: 6px; font-style: normal; }
.s-menu { height: 8px; display: flex; gap: 7px; padding-left: 3px; color: #999; flex: none; }
.s-bar { height: 16px; display: flex; align-items: center; gap: 4px; padding-left: 6px; flex: none; border-top: 1px solid #ddd; }
.s-lab { height: 9px; padding: 1px 0 0 1px; flex: none; border-top: 1px solid #bbb; background: linear-gradient(90deg, #f0f0f0 200px, #fff 200px); }
.s-tools { height: 12px; padding-left: 2px; border: 0; flex: none; background: linear-gradient(90deg, #f0f0f0 200px, #fff 200px); }
.s-layers { flex: none; font-size: 5.5px; font-weight: bold; color: #222; background: #fff; } .s-layers div { width: 200px; height: 7.5px; display: flex; align-items: center; gap: 2px; padding-left: 10px; } .s-layers i { font-size: 7px; font-style: normal; }
.s-layers u { width: 7px; height: 7px; } .l1 { height: 1px !important; background: #e2bc7a; } .l2 { background: #9b6bb0; } .l3 { border: 1px solid #000; } .on { background: #e9e9e9; } .ul { text-decoration: underline; }
.s-fill { flex: 1; background: #fff; }
.s-dock { height: 10px; flex: none; display: flex; align-items: center; padding-left: 3px; background: linear-gradient(90deg, #e6e6e6 201px, #fff 202px); } .cur { background: #f8f8f8; margin-left: 9px; }
.s-status { height: 12px; flex: none; display: flex; align-items: center; font-size: 5px; background: #f0f0f0; } .loc { width: 105px; height: 8px; margin-left: 1px; border: 1px solid #ddd; background: #fff; display: flex; align-items: center; gap: 4px; padding-left: 4px; color: #999; }
.m1 { margin-left: 4px; } .m2 { margin-left: 7px; } .bx { height: 8px; border: 1px solid #ccc; background: #fff; display: flex; align-items: center; justify-content: space-between; padding: 0 1px; margin-left: 2px; } .b1 { width: 40px; } .b2 { width: 35px; } .b3 { width: 35px; } .b4 { width: 35px; }
.m3 { margin-left: 2px; } .m4 { margin-left: 6px; } .m5 { margin-left: 5px; } .m6 { margin-left: 3px; } .m7 { margin-left: 4px; } .m8 { margin-left: 3px; } .m9 { margin-left: 6px; } .m10 { margin-left: 7px; }
.s-task { height: 16px; flex: none; background: linear-gradient(90deg, #20333d, #1d2a42); display: flex; align-items: center; color: #fff; } .s-start { width: 18px; display: flex; justify-content: center; } .s-search { width: 143px; height: 16px; background: #f1f1f1; color: #444; display: flex; align-items: center; gap: 5px; padding-left: 5px; font-size: 6.5px; }
.s-app { width: 20.4px; height: 16px; display: flex; align-items: center; justify-content: center; } .act { background: #4b5963; }
.s-tray { margin-left: 17px; } .s-esp { margin-left: 7px; font-size: 4.5px; } .s-clock { width: 28px; display: flex; flex-direction: column; align-items: center; line-height: 7px; margin: 0 5px 0 5px; font-size: 5px; }
.bullet { display: flex; align-items: center; height: 22px; margin: 11px 0 0 24px; font-size: 16px; color: #333; } .bullet i { width: 5px; height: 5px; border-radius: 3px; background: #333; margin: 4px 19px 0 0; } .sq { position: relative; } .sq svg { position: absolute; left: 0; bottom: -2px; }
.status { height: 22px; flex: none; background: #2b579a; color: #fff; font-size: 11px; display: flex; align-items: center; padding: 0 5px; } .status > span, .right > span { position: relative; top: -1px; } .st2 { margin-left: 18px; } .st3 { margin-left: 17px; } .st4 { margin-left: 17px; }
.right { margin-left: auto; display: flex; align-items: center; } .view { width: 38px; height: 22px; margin-left: 12px; background: #1e4886; display: flex; align-items: center; justify-content: center; } .web { margin-left: 12px; } .zoom { margin: 0 15px 0 15px; }
.taskbar { height: 37px; flex: none; background: linear-gradient(90deg, #20343c, #20323f 55%, #1b2740); display: flex; color: #fff; } .start { width: 45px; display: flex; align-items: center; justify-content: center; padding: 3px 3px 0 0; } .search { width: 344px; background: #f1f1f1; color: #444; display: flex; align-items: center; font-size: 15px; padding: 3px 0 0 12px; } .search span { margin-left: 10px; }
.app { width: 49px; flex: none; display: flex; align-items: center; justify-content: center; padding-top: 3px; } .app.act { width: 44px; margin: 0 4px 0 1px; }
.tray { flex: 1; display: flex; align-items: center; padding: 3px 2px 0 40px; } .esp { margin-left: 4px; font-size: 12px; } .clock { width: 60px; margin-left: 15px; display: flex; flex-direction: column; align-items: center; line-height: 18px; font-size: 12px; } .note { margin-left: 17px; } .peek { width: 1px; height: 37px; background: #6b7382; margin-left: auto; margin-top: -3px; }
.dialog { position: absolute; left: 434px; top: 63px; width: 493px; height: 567px; border: 1px solid #6a6a6a; background: #f0f0f0; box-shadow: 0 5px 16px rgba(0, 0, 0, .4); color: #111; font: 11px/14px "DejaVu Sans Condensed", "DejaVu Sans", sans-serif; }
.d-title { height: 30px; background: #fff; display: flex; align-items: center; padding: 0 10px 0 8px; font: 12px/16px "Noto Sans", "Open Sans", sans-serif; } .d-title span { margin-left: 5px; } .x { margin-left: auto; margin-top: -2px; }
.d-body { padding: 12px 11px 0 10px; } .row { display: flex; align-items: center; } .row > label, .select span, .input span { padding-top: 2px; } .r1 { height: 21px; } .r1 label { margin-right: 7px; } .select { flex: 1; height: 21px; border: 1px solid #b3b3b3; border-radius: 2px; background: linear-gradient(#fdfdfd, #efefef); display: flex; align-items: center; justify-content: space-between; padding: 0 6px 0 3px; }
.r2 { margin-top: 7px; height: 21px; } .r2 label { margin-right: 23px; } .input { width: 382px; height: 21px; border: 1px solid #aeaeae; border-radius: 2px; background: #fff; display: flex; align-items: center; padding-left: 1px; } .input svg { margin-left: 8px; } .dots { flex: 1; height: 21px; margin-left: 6px; border: 1px solid #b3b3b3; border-radius: 2px; background: #fafafa; text-align: center; line-height: 21px; }
.r3 { margin-top: 6px; height: 430px; } .r3 label { margin-right: 7px; padding-top: 4px !important; } .list { flex: 1; height: 430px; border: 1px solid #b5b5b5; padding-top: 1px; } .item { height: 26px; display: flex; align-items: center; padding-left: 3px; color: #777; font: 12px/16px "Noto Sans", "Open Sans", sans-serif; } .ci { margin: 0 7px; } .item .ci { margin-top: -2px; } .item .chk { margin-top: -2px; }
.btns { display: flex; justify-content: flex-end; gap: 6px; margin-top: 6px; } .btn { width: 80px; height: 21px; border: 1px solid #b3b3b3; border-radius: 2px; background: linear-gradient(#fefefe, #f3f3f3); text-align: center; line-height: 21px; padding-right: 2px; } .def { border-color: #58a3d8; }
</style>
